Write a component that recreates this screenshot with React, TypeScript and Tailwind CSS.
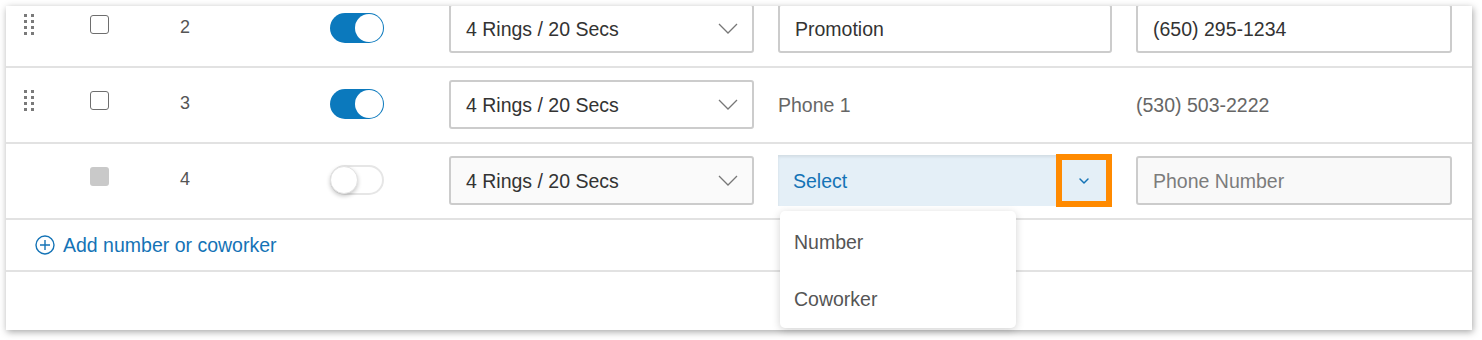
import { ChevronDown } from 'lucide-react';

const font = { fontFamily: '"Liberation Sans", Arial, sans-serif' };

function DragHandle() {
    return (
        <div className="grid grid-cols-2 gap-x-[4px] gap-y-[3px] w-[9px]">
            {[0, 1, 2, 3, 4, 5, 6, 7].map((i) => (
                <span key={i} className="block w-[3px] h-[3px] bg-[#7a7a7a]" />
            ))}
        </div>
    );
}

function Toggle({ on }: { on: boolean }) {
    if (on) {
        return (
            <div className="w-[54px] h-[30px] rounded-full bg-[#0b79bd] flex items-center justify-end pr-[1px]">
                <span className="block w-[28px] h-[28px] rounded-full bg-white" />
            </div>
        );
    }
    return (
        <div className="w-[54px] h-[30px] rounded-full border-2 border-[#e6e6e6] bg-white flex items-center">
            <span className="block w-[28px] h-[28px] -ml-[2px] rounded-full bg-white shadow-[0_2px_4px_rgba(0,0,0,0.22)] border border-[#e2e2e2]" />
        </div>
    );
}

function RingSelect({ muted }: { muted?: boolean }) {
    return (
        <div
            className={`w-[305px] h-[49px] border-2 border-[#cccccc] rounded-[3px] flex items-center justify-between pl-[15px] pr-[14px] text-[19.5px] text-[#333] ${muted ? 'bg-[#fafafa]' : 'bg-white'}`}
        >
            <span className="pt-[2px]">4 Rings / 20 Secs</span>
            <svg width="20" height="11" viewBox="0 0 20 11" fill="none">
                <path d="M1 1 L10 10 L19 1" stroke="#777" strokeWidth="1.3" />
            </svg>
        </div>
    );
}

function Row({ n, first, children, handle = true, disabled }: { n: number; first?: boolean; children: React.ReactNode; handle?: boolean; disabled?: boolean }) {
    return (
        <div className={`h-[76px] border-b-2 border-[#e2e2e2] flex items-start pt-[12px] pl-[18px] ${first ? '-mt-[14px]' : ''}`}>
            <div className="w-[66px] h-[40px] flex items-center">{handle && <DragHandle />}</div>
            <div className="w-[90px] h-[40px] flex items-center">
                {disabled ? (
                    <span className="block w-[19px] h-[19px] rounded-[3px] bg-[#c9c9c9]" />
                ) : (
                    <span className="block w-[19px] h-[19px] rounded-[3px] border-[1.5px] border-[#6e6e6e] bg-white" />
                )}
            </div>
            <div className="w-[150px] h-[46px] flex items-center text-[18px] text-[#555] pt-[1px]">{n}</div>
            <div className="w-[119px] h-[48px] flex items-center">
                <Toggle on={!disabled} />
            </div>
            <RingSelect muted={disabled} />
            {children}
        </div>
    );
}

export default function App() {
    return (
        <div className="w-[1482px] h-[340px] bg-white pt-[6px] pl-[6px]" style={font}>
            <div className="relative w-[1466px] h-[324px] bg-white shadow-[1px_2px_7px_rgba(0,0,0,0.35)]">
                <div className="h-full overflow-hidden">
                    <Row n={2} first>
                        <div className="ml-[24px] w-[334px] h-[49px] border-2 border-[#cccccc] rounded-[3px] bg-white flex items-center pl-[15px] pt-[2px] text-[19.5px] text-[#333]">
                            Promotion
                        </div>
                        <div className="ml-[24px] w-[316px] h-[49px] border-2 border-[#cccccc] rounded-[3px] bg-white flex items-center pl-[15px] pt-[2px] text-[19.5px] text-[#333]">
                            (650) 295-1234
                        </div>
                    </Row>
                    <Row n={3}>
                        <div className="ml-[24px] w-[334px] h-[49px] flex items-center pt-[2px] text-[19.5px] text-[#666]">Phone 1</div>
                        <div className="ml-[24px] w-[316px] h-[49px] flex items-center pt-[2px] text-[19.5px] text-[#666]">(530) 503-2222</div>
                    </Row>
                    <Row n={4} handle={false} disabled>
                        <div className="ml-[24px] -mt-[1px] w-[334px] h-[51px] bg-[#e4eff7] shadow-[inset_0_2px_3px_rgba(0,0,0,0.08)] flex items-center justify-between pl-[15px] text-[19.5px] text-[#1473b6]">
                            <span className="pt-[2px]">Select</span>
                            <span className="w-[56px] h-[53px] border-[6px] border-[#ff8a00] flex items-center justify-center">
                                <ChevronDown size={16} strokeWidth={2.2} className="text-[#1473b6]" />
                            </span>
                        </div>
                        <div className="ml-[24px] w-[316px] h-[49px] border-2 border-[#cccccc] rounded-[3px] bg-[#f9f9f9] flex items-center pl-[15px] pt-[2px] text-[19.5px] text-[#7c7c7c]">
                            Phone Number
                        </div>
                    </Row>
                    <div className="h-[52px] border-b-2 border-[#e2e2e2] flex items-center pl-[29px] gap-[8px] text-[19.5px] text-[#1473b6]">
                        <svg width="20" height="20" viewBox="0 0 20 20" fill="none">
                            <circle cx="10" cy="10" r="9" stroke="#1473b6" strokeWidth="1.4" />
                            <path d="M10 5 V15 M5 10 H15" stroke="#1473b6" strokeWidth="1.4" />
                        </svg>
                        <span className="pt-[2px]">Add number or coworker</span>
                    </div>
                </div>
                <div className="absolute left-[774px] top-[205px] w-[236px] h-[117px] bg-white rounded-[5px] shadow-[0_2px_8px_rgba(0,0,0,0.18)] flex flex-col text-[19.5px] text-[#555] pl-[14px] pt-[3px]">
                    <div className="h-[58px] flex items-center">Number</div>
                    <div className="h-[58px] flex items-center">Coworker</div>
                </div>
            </div>
        </div>
    );
}
